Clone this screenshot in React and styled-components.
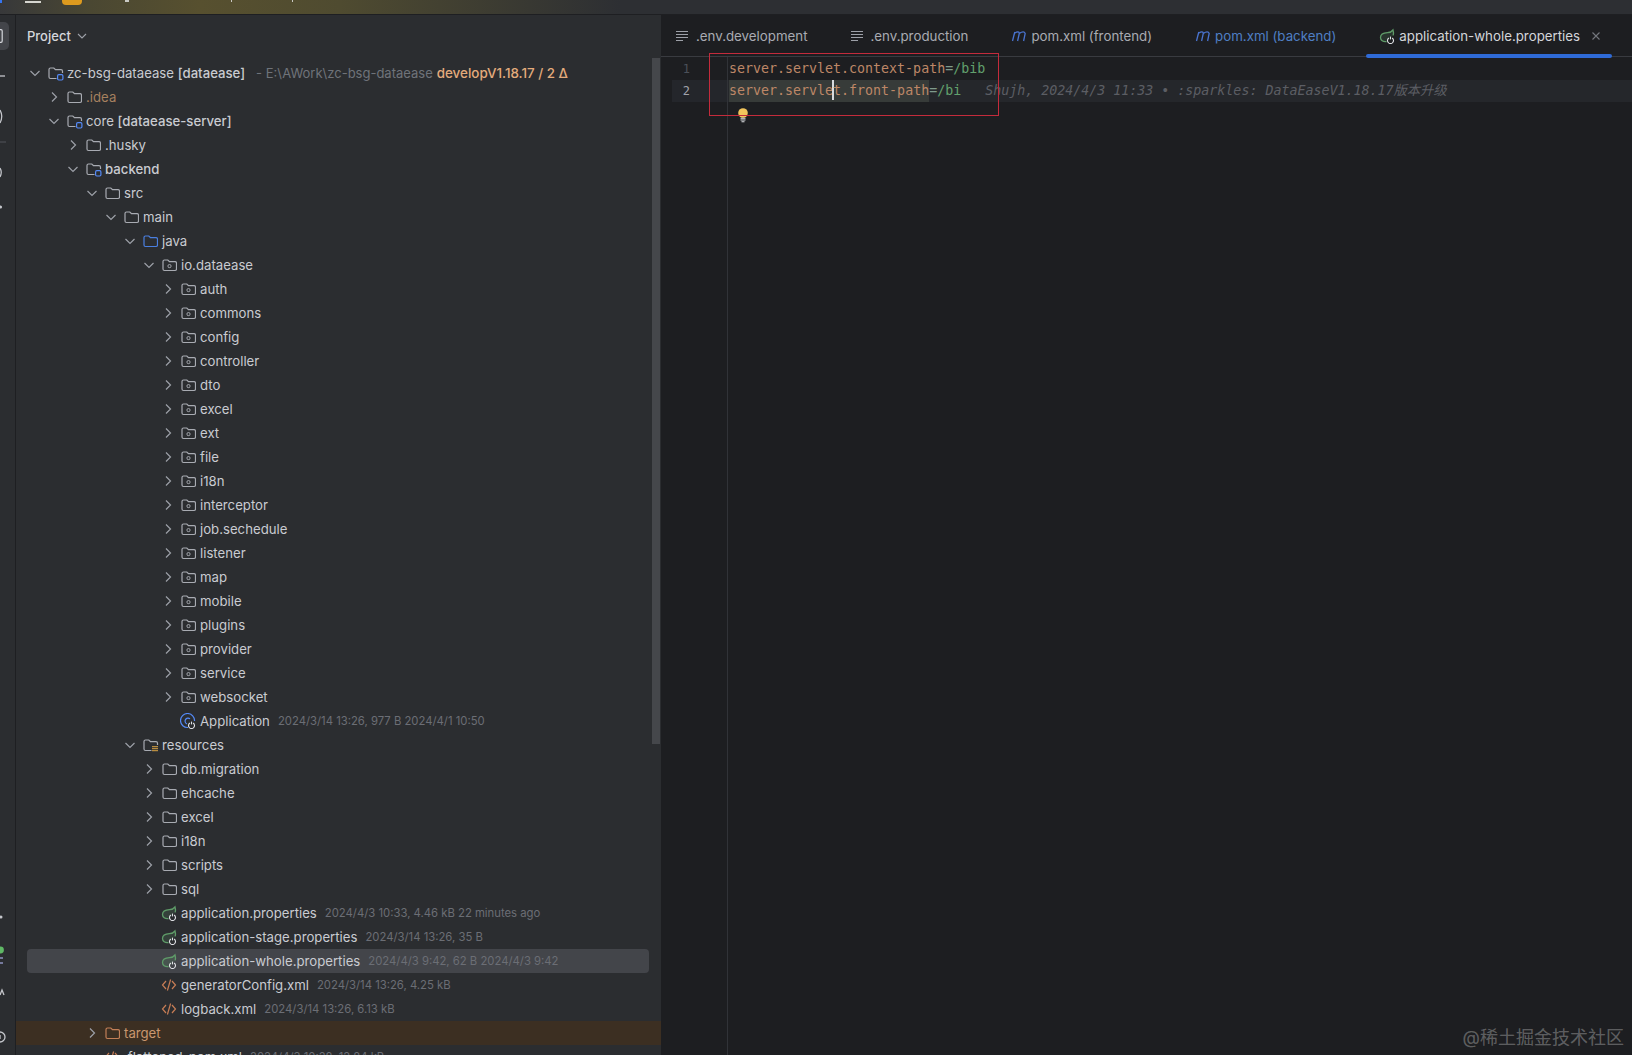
import styled, { createGlobalStyle } from 'styled-components';

const GlobalStyle = createGlobalStyle`
  html, body {
    margin: 0;
    background: #2b2d30;
    overflow: hidden;
  }
`;

const UI_FONT = `Inter, "Noto Sans CJK SC", sans-serif`;
const MONO_FONT = `"DejaVu Sans Mono", "Noto Sans CJK SC", monospace`;

const Window = styled.div`
  width: 1632px;
  height: 1055px;
  display: flex;
  flex-direction: column;
  overflow: hidden;
  position: relative;
  font-family: ${UI_FONT};
`;

const TopBar = styled.div`
  flex: none;
  height: 14px;
  display: flex;
  align-items: flex-start;
  border-bottom: 1px solid #1e1f22;
  background: linear-gradient(90deg, #37383a 0, #4a4732 90px, #57502f 200px, #4f4b30 340px, #2d2f33 620px);
`;

const BlueTick = styled.div`
  width: 2px;
  height: 3px;
  background: #3574f0;
`;

const Burger = styled.div`
  width: 16px;
  height: 2px;
  margin: 1px 0 0 23px;
  background: #d6d6d0;
`;

const Badge = styled.div`
  width: 20px;
  height: 5px;
  margin-left: 21px;
  border-radius: 0 0 4px 4px;
  background: #dd9a1e;
`;

const TitleTail = styled.div`
  width: ${(p) => p.$w}px;
  height: 2px;
  margin-left: ${(p) => p.$left}px;
  background: #c9c9c4;
`;

const Main = styled.div`
  flex: 1;
  display: flex;
  min-height: 0;
`;

const Strip = styled.div`
  flex: none;
  width: 15px;
  display: flex;
  flex-direction: column;
  border-right: 1px solid #1e1f22;
  background: #2b2d30;
`;

const ActiveTool = styled.div`
  width: 9px;
  height: 28px;
  margin-top: 7px;
  border-radius: 0 5px 5px 0;
  background: #43454a;
  display: flex;
  align-items: center;
`;

const StripIcons = styled.svg`
  display: block;
  margin-top: ${(p) => p.$top || 0};
`;

const TreePanel = styled.div`
  flex: none;
  width: 645px;
  position: relative;
  background: #2b2d30;
  overflow: hidden;
`;

const PanelHeader = styled.div`
  height: 42px;
  padding: 0 0 4px 11px;
  display: flex;
  align-items: center;
  gap: 6px;
  color: #d5d7dc;
  font-size: 13px;
  font-weight: 500;
`;

const ScrollThumb = styled.div`
  position: absolute;
  top: 43px;
  left: 636px;
  width: 8px;
  height: 686px;
  background: #45474b;
`;

const Row = styled.div`
  height: 24px;
  box-sizing: border-box;
  display: flex;
  align-items: center;
  white-space: nowrap;
  font-size: 13.2px;
  color: #c9cbd1;
  margin: ${(p) => (p.$ignored ? '0' : '0 12px 0 11px')};
  padding-left: ${(p) => (p.$ignored ? 12 : 1) + p.$depth * 19}px;
  background: ${(p) => (p.$selected ? '#43454a' : p.$ignored ? '#3c2f22' : 'transparent')};
  border-radius: ${(p) => (p.$ignored ? '0' : '4px')};
`;

const ChevronSlot = styled.div`
  flex: none;
  width: 14px;
  height: 16px;
  margin-right: 5px;
`;

const Label = styled.span`
  margin-left: 4px;
  font-weight: ${(p) => (p.$strong ? 500 : 400)};
  color: ${(p) => p.$color || 'inherit'};
`;

const Bold = styled.b`
  font-weight: 500;
`;

const Meta = styled.span`
  margin-left: 8px;
  font-size: 11.3px;
  color: #6b6e75;
`;

const PathNote = styled.span`
  margin-left: 11px;
  font-size: 13px;
  color: #6f737a;
`;

const Branch = styled.span`
  margin-left: 4px;
  font-size: 13.4px;
  font-weight: 500;
  color: #e3ab7c;
`;

const Editor = styled.div`
  flex: 1;
  min-width: 0;
  display: flex;
  flex-direction: column;
  position: relative;
  background: #1d1e21;
`;

const TabBar = styled.div`
  flex: none;
  height: 41px;
  padding-left: 2px;
  display: flex;
  border-bottom: 1px solid #393b40;
`;

const Tab = styled.div`
  position: relative;
  display: flex;
  align-items: center;
  gap: 4px;
  padding: 0 ${(p) => (p.$active ? 11 : 30)}px 0 13px;
  font-size: 13.3px;
  white-space: nowrap;
  color: ${(p) => (p.$active ? '#d3d5da' : p.$modified ? '#4f7fc4' : '#a9abb2')};

  ${(p) =>
    p.$active &&
    `
    &::after {
      content: '';
      position: absolute;
      left: 0;
      right: 0;
      bottom: -2px;
      height: 4px;
      border-radius: 2px;
      background: #2f6bd8;
    }
  `}
`;

const EditorBody = styled.div`
  flex: 1;
  display: flex;
  min-height: 0;
  padding-top: 1px;
  font-family: ${MONO_FONT};
  font-size: 13.3px;
`;

const Gutter = styled.div`
  flex: none;
  width: 55px;
  padding-left: 11px;
  margin-top: -1px;
  padding-top: 1px;
  border-right: 1px solid #313338;
`;

const GutterLine = styled.div`
  height: 22px;
  line-height: 22px;
  box-sizing: border-box;
  padding-right: 37px;
  text-align: right;
  font-size: 12px;
  color: ${(p) => (p.$current ? '#a1a3ab' : '#4b5059')};
  background: ${(p) => (p.$current ? '#24262b' : 'transparent')};
`;

const Code = styled.div`
  flex: 1;
  min-width: 0;
`;

const CodeLine = styled.div`
  height: 22px;
  line-height: 22px;
  padding-left: 1px;
  white-space: pre;
  background: ${(p) => (p.$current ? '#25272b' : 'transparent')};
`;

const Key = styled.span`
  color: #bd8767;
`;

const Selected = styled.span`
  display: inline-block;
  height: 22px;
  background: #373b39;
  color: #bd8767;
`;

const Caret = styled.span`
  display: inline-block;
  width: 2px;
  height: 20px;
  margin: 0 -1px;
  vertical-align: top;
  background: #d8dade;
`;

const Eq = styled.span`
  color: #7f9a8c;
`;

const Value = styled.span`
  color: #62a06d;
`;

const Blame = styled.span`
  margin-left: 24px;
  font-style: italic;
  color: #5c5e64;
`;

const BulbLine = styled.div`
  height: 18px;
  padding: 6px 0 0 9px;
`;

const RedBox = styled.div`
  position: absolute;
  left: 48px;
  top: 38px;
  width: 288px;
  height: 61px;
  border: 1px solid #c42b3c;
`;

const Watermark = styled.div`
  position: absolute;
  right: 8px;
  bottom: 6px;
  font-size: 18px;
  color: rgba(255, 255, 255, 0.3);
`;

/* icons */

const Chevron = ({ open }) => (
  <svg width="14" height="16" viewBox="0 0 14 16" fill="none" stroke="#9da0a8" strokeWidth="1.2">
    <path d={open ? 'M2.5 6 L7 10.5 L11.5 6' : 'M5 3.5 L9.5 8 L5 12.5'} />
  </svg>
);

const FOLDER = 'M2 4.5 C2 3.6 2.6 3 3.5 3 H6.8 L8.5 4.7 H14 C14.9 4.7 15.5 5.3 15.5 6.2 V12 C15.5 12.9 14.9 13.5 14 13.5 H3.5 C2.6 13.5 2 12.9 2 12 Z';
const FOLDER_OPEN = 'M9.5 13.5 H3.5 C2.6 13.5 2 12.9 2 12 V4.5 C2 3.6 2.6 3 3.5 3 H6.8 L8.5 4.7 H14 C14.9 4.7 15.5 5.3 15.5 6.2 V8';

const PowerMark = () => (
  <g fill="none" stroke="#dfe1e5" strokeWidth="1.1">
    <path d="M9.9 10 A3 3 0 1 0 13.1 10" />
    <path d="M11.5 8.6 V11.4" />
  </g>
);

const Spring = () => (
  <svg width="16" height="16" viewBox="0 0 16 16" fill="none" style={{ flex: 'none' }}>
    <path
      d="M7.5 13.6 C4 14.2 1.5 12.3 1.5 9.6 C1.5 6.2 4.6 4.8 8.4 4.6 C10.8 4.5 12.7 3.8 14 2 C14.6 4 14.7 5.8 14.2 7.4"
      fill="rgba(95,156,105,0.18)"
      stroke="#5f9c69"
      strokeWidth="1.3"
    />
    <PowerMark />
  </svg>
);

const AppClass = () => (
  <svg width="16" height="16" viewBox="0 0 16 16" fill="none">
    <path d="M8 14.5 A7 7 0 1 1 14.5 8" stroke="#548af7" strokeWidth="1.2" />
    <path d="M10 5.8 A3 3 0 1 0 7 10.9" stroke="#548af7" strokeWidth="1.2" />
    <PowerMark />
  </svg>
);

const Xml = () => (
  <svg width="16" height="16" viewBox="0 0 16 16" fill="none" stroke="#c77d55" strokeWidth="1.2">
    <path d="M5 4 L1.5 8 L5 12" />
    <path d="M11 4 L14.5 8 L11 12" />
    <path d="M9.6 2.5 L6.4 13.5" />
  </svg>
);

const Folder = ({ kind, stroke = '#a8abb2' }) => {
  if (kind === 'module' || kind === 'resources') {
    return (
      <svg width="17" height="17" viewBox="0 0 17 17" fill="none" style={{ marginRight: -1 }}>
        <path d={FOLDER_OPEN} stroke={stroke} strokeWidth="1.2" />
        {kind === 'module' ? (
          <rect x="10.6" y="9.7" width="5.3" height="5.3" rx="1.2" stroke="#548af7" strokeWidth="1.2" />
        ) : (
          <path d="M10 9.7 H16 M10 11.7 H16 M10 13.7 H16" stroke="#d9a343" strokeWidth="1" />
        )}
      </svg>
    );
  }
  return (
    <svg width="16" height="16" viewBox="0 0 16 16" fill="none">
      <path d={FOLDER} stroke={kind === 'source' ? '#4a7fe0' : stroke} strokeWidth="1.2" />
      {kind === 'package' && <rect x="7" y="7.6" width="3" height="3" rx="1.2" stroke={stroke} strokeWidth="1" />}
    </svg>
  );
};

const EnvIcon = () => (
  <svg width="16" height="12" viewBox="0 0 16 12" stroke="#9da0a8" strokeWidth="1">
    <path d="M0 1.5 H12 M0 4.5 H12 M0 7.5 H12 M0 10.5 H7" />
  </svg>
);

const MavenIcon = () => (
  <svg width="16" height="14" viewBox="0 0 16 14" fill="none" stroke="#4a74d0" strokeWidth="1.3">
    <path d="M1.5 12 L3.8 3" />
    <path d="M3.7 4 Q8 1.4 8.3 4.4 L6.6 12" />
    <path d="M8.3 4.4 Q13 1.4 14.2 4.4 L12.6 12" />
  </svg>
);

const CloseIcon = () => (
  <svg width="10" height="10" viewBox="0 0 10 10" stroke="#74777e" strokeWidth="1.1" style={{ marginLeft: 7 }}>
    <path d="M1.5 1.5 L8.5 8.5 M8.5 1.5 L1.5 8.5" />
  </svg>
);

const Bulb = () => (
  <svg width="12" height="15" viewBox="0 0 12 15" style={{ display: 'block' }}>
    <circle cx="6" cy="5" r="4.8" fill="#f2c55c" />
    <path d="M3.5 10.3 H8.5 M3.5 12 H8.5 M4.5 13.8 H7.5" stroke="#dfe1e5" strokeWidth="1.1" />
  </svg>
);

const ProjectChevron = () => (
  <svg width="10" height="6" viewBox="0 0 10 6" fill="none" stroke="#9da0a8" strokeWidth="1.1">
    <path d="M1 1 L5 5 L9 1" />
  </svg>
);

const pkg = (name) => ({ d: 7, name, kind: 'package', chevron: 'closed' });
const plain = (name) => ({ d: 6, name, kind: 'folder', chevron: 'closed' });

const ROWS = [
  {
    d: 0,
    kind: 'module',
    chevron: 'open',
    name: (
      <>
        zc-bsg-dataease <Bold>[dataease]</Bold>
      </>
    ),
    note: '- E:\\AWork\\zc-bsg-dataease',
    branch: 'developV1.18.17 / 2 Δ',
  },
  { d: 1, name: '.idea', kind: 'folder', chevron: 'closed', color: '#a5805f' },
  {
    d: 1,
    kind: 'module',
    chevron: 'open',
    name: (
      <>
        core <Bold>[dataease-server]</Bold>
      </>
    ),
  },
  { d: 2, name: '.husky', kind: 'folder', chevron: 'closed' },
  { d: 2, name: 'backend', kind: 'module', chevron: 'open', strong: true },
  { d: 3, name: 'src', kind: 'folder', chevron: 'open' },
  { d: 4, name: 'main', kind: 'folder', chevron: 'open' },
  { d: 5, name: 'java', kind: 'source', chevron: 'open' },
  { d: 6, name: 'io.dataease', kind: 'package', chevron: 'open' },
  ...['auth', 'commons', 'config', 'controller', 'dto', 'excel', 'ext', 'file', 'i18n', 'interceptor', 'job.sechedule', 'listener', 'map', 'mobile', 'plugins', 'provider', 'service', 'websocket'].map(pkg),
  { d: 7, name: 'Application', kind: 'app', meta: '2024/3/14 13:26, 977 B 2024/4/1 10:50' },
  { d: 5, name: 'resources', kind: 'resources', chevron: 'open' },
  ...['db.migration', 'ehcache', 'excel', 'i18n', 'scripts', 'sql'].map(plain),
  { d: 6, name: 'application.properties', kind: 'spring', meta: '2024/4/3 10:33, 4.46 kB 22 minutes ago' },
  { d: 6, name: 'application-stage.properties', kind: 'spring', meta: '2024/3/14 13:26, 35 B' },
  { d: 6, name: 'application-whole.properties', kind: 'spring', meta: '2024/4/3 9:42, 62 B 2024/4/3 9:42', selected: true },
  { d: 6, name: 'generatorConfig.xml', kind: 'xml', meta: '2024/3/14 13:26, 4.25 kB' },
  { d: 6, name: 'logback.xml', kind: 'xml', meta: '2024/3/14 13:26, 6.13 kB' },
  { d: 3, name: 'target', kind: 'target', chevron: 'closed', color: '#c9976f', ignored: true },
  { d: 3, name: '.flattened-pom.xml', kind: 'xml', meta: '2024/4/3 10:28, 12.84 kB' },
];

const RowIcon = ({ kind }) => {
  if (kind === 'spring') return <Spring />;
  if (kind === 'app') return <AppClass />;
  if (kind === 'xml') return <Xml />;
  if (kind === 'target') return <Folder kind="folder" stroke="#c27f57" />;
  return <Folder kind={kind} />;
};

const TreeRow = ({ row }) => (
  <Row $depth={row.d} $selected={row.selected} $ignored={row.ignored}>
    <ChevronSlot>{row.chevron && <Chevron open={row.chevron === 'open'} />}</ChevronSlot>
    <RowIcon kind={row.kind} />
    <Label $strong={row.strong} $color={row.color}>
      {row.name}
    </Label>
    {row.note && <PathNote>{row.note}</PathNote>}
    {row.branch && <Branch>{row.branch}</Branch>}
    {row.meta && <Meta>{row.meta}</Meta>}
  </Row>
);

export default function App() {
  return (
    <Window>
      <GlobalStyle />
      <TopBar>
        <BlueTick />
        <Burger />
        <Badge />
        <TitleTail $w={4} $left={43} />
        <TitleTail $w={1} $left={102} />
        <TitleTail $w={1} $left={60} />
      </TopBar>
      <Main>
        <Strip>
          <ActiveTool>
            <svg width="3" height="14" viewBox="0 0 3 14" fill="none" stroke="#d5d7dc" strokeWidth="1.2">
              <path d="M0 0.6 H1 Q2.2 0.6 2.2 2 V12 Q2.2 13.4 1 13.4 H0" />
            </svg>
          </ActiveTool>
          <StripIcons width="14" height="160" viewBox="0 0 14 160" $top="0" fill="none" stroke="#c4c6cb" strokeWidth="1.3">
            <path d="M0 26 H5" />
            <path d="M0 60 Q3.5 66 0 73" />
            <path d="M0 92 H6" stroke="#4a4c51" />
            <path d="M0 118 Q2.5 122 0 127" />
            <circle cx="0.5" cy="157" r="1.6" fill="#c4c6cb" stroke="none" />
          </StripIcons>
          <StripIcons width="14" height="145" viewBox="0 0 14 145" $top="auto" fill="none" stroke="#c4c6cb" strokeWidth="1.3">
            <circle cx="1" cy="7" r="1.5" fill="#c4c6cb" stroke="none" />
            <circle cx="0.5" cy="40" r="3.4" fill="#5fb865" stroke="none" />
            <path d="M0 48 H3 M0 53 H3" stroke="#8f93c0" />
            <path d="M0 85 L2 80 L4 85" />
            <circle cx="0" cy="127" r="5" />
            <path d="M0 125 V129" />
          </StripIcons>
        </Strip>
        <TreePanel>
          <PanelHeader>
            Project
            <ProjectChevron />
          </PanelHeader>
          <ScrollThumb />
          {ROWS.map((row, i) => (
            <TreeRow key={i} row={row} />
          ))}
        </TreePanel>
        <Editor>
          <TabBar>
            <Tab>
              <EnvIcon />
              .env.development
            </Tab>
            <Tab>
              <EnvIcon />
              .env.production
            </Tab>
            <Tab>
              <MavenIcon />
              pom.xml (frontend)
            </Tab>
            <Tab $modified>
              <MavenIcon />
              pom.xml (backend)
            </Tab>
            <Tab $active>
              <Spring />
              application-whole.properties
              <CloseIcon />
            </Tab>
          </TabBar>
          <EditorBody>
            <Gutter>
              <GutterLine>1</GutterLine>
              <GutterLine $current>2</GutterLine>
            </Gutter>
            <Code>
              <CodeLine>
                <Key>server.servlet.context-path</Key>
                <Eq>=</Eq>
                <Value>/bib</Value>
              </CodeLine>
              <CodeLine $current>
                <Selected>
                  server.servle
                  <Caret />
                  t.front-path
                </Selected>
                <Eq>=</Eq>
                <Value>/bi</Value>
                <Blame>Shujh, 2024/4/3 11:33 • :sparkles: DataEaseV1.18.17版本升级</Blame>
              </CodeLine>
              <BulbLine>
                <Bulb />
              </BulbLine>
            </Code>
          </EditorBody>
          <RedBox />
          <Watermark>@稀土掘金技术社区</Watermark>
        </Editor>
      </Main>
    </Window>
  );
}
